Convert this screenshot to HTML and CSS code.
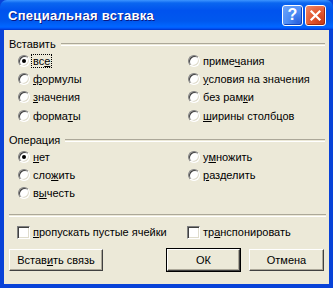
FILE: index.html
```html
<!DOCTYPE html>
<html>
<head>
    <meta charset="utf-8">
    <title>Специальная вставка</title>
    <link rel="stylesheet" href="styles.css">
</head>
<body>

<div class="window">
    <div class="titlebar">
        <div class="title">Специальная вставка</div>
        <div class="title-btn help">?</div>
        <div class="title-btn close">
            <svg width="13" height="13" viewBox="0 0 13 13">
                <path d="M2.5 2.5 L10.5 10.5 M10.5 2.5 L2.5 10.5" stroke="#fff" stroke-width="2.2" stroke-linecap="square"/>
            </svg>
        </div>
    </div>

    <div class="client">
        <div class="group-label"><span>Вставить</span><div class="etch"></div></div>
        <div class="options paste">
            <div class="col">
                <div class="opt"><span class="radio checked"></span><span class="focus">вс<u>е</u></span></div>
                <div class="opt"><span class="radio"></span><span><u>ф</u>ормулы</span></div>
                <div class="opt"><span class="radio"></span><span><u>з</u>начения</span></div>
                <div class="opt"><span class="radio"></span><span>форма<u>т</u>ы</span></div>
            </div>
            <div class="col">
                <div class="opt"><span class="radio"></span><span>приме<u>ч</u>ания</span></div>
                <div class="opt"><span class="radio"></span><span><u>у</u>словия на значения</span></div>
                <div class="opt"><span class="radio"></span><span>без рам<u>к</u>и</span></div>
                <div class="opt"><span class="radio"></span><span><u>ш</u>ирины столбцов</span></div>
            </div>
        </div>

        <div class="group-label second"><span>Операция</span><div class="etch"></div></div>
        <div class="options">
            <div class="col">
                <div class="opt"><span class="radio checked"></span><span><u>н</u>ет</span></div>
                <div class="opt"><span class="radio"></span><span>сло<u>ж</u>ить</span></div>
                <div class="opt"><span class="radio"></span><span>в<u>ы</u>честь</span></div>
            </div>
            <div class="col">
                <div class="opt"><span class="radio"></span><span>у<u>м</u>ножить</span></div>
                <div class="opt"><span class="radio"></span><span><u>р</u>азделить</span></div>
            </div>
        </div>

        <div class="etch separator"></div>

        <div class="options checks">
            <div class="col">
                <div class="opt"><span class="check"></span><span><u>п</u>ропускать пустые ячейки</span></div>
            </div>
            <div class="col">
                <div class="opt"><span class="check"></span><span>тр<u>а</u>нспонировать</span></div>
            </div>
        </div>

        <div class="buttons">
            <button class="btn link">Встав<u>и</u>ть связь</button>
            <div class="spacer"></div>
            <button class="btn default">ОК</button>
            <button class="btn">Отмена</button>
        </div>
    </div>
</div>

</body>
</html>
```

FILE: styles.css
```css
body {
    margin: 0;
    font-family: "Liberation Sans", Arial, sans-serif;
    font-size: 11px;
    color: #000;
}
.window {
    width: 333px;
    height: 288px;
    display: flex;
    flex-direction: column;
    background: #0842d8;
}
.titlebar {
    height: 30px;
    flex-shrink: 0;
    display: flex;
    align-items: center;
    padding: 0 7px 0 7px;
    border-radius: 7px 7px 0 0;
    background: linear-gradient(to bottom, #3d95ff 0%, #0a66f0 10%, #0053ee 35%, #0058ee 70%, #0066ff 88%, #005bff 94%, #003dd7 97%, #003dd7 100%);
}
.title {
    flex: 1;
    color: #fff;
    font-weight: bold;
    font-size: 13px;
    letter-spacing: 0.3px;
    text-shadow: 1px 1px #0a1883;
    padding-left: 1px;
}
.title-btn {
    width: 19px;
    height: 19px;
    border: 1px solid #fff;
    border-radius: 3px;
    margin-left: 2px;
    display: flex;
    align-items: center;
    justify-content: center;
    color: #fff;
    font-weight: bold;
    font-size: 16px;
}
.help {
    background: radial-gradient(circle at 80% 85%, #2c63e0 0%, #4c8cf5 45%, #6fa5fa 100%);
    box-shadow: inset -1px -1px #1443b8;
}
.close {
    background: radial-gradient(circle at 80% 85%, #c93d1a 0%, #e2562e 45%, #ef8b6b 100%);
    box-shadow: inset -1px -1px #a02a0e;
}
.client {
    flex: 1;
    background: #ece9d8;
    margin: 0 4px 4px 4px;
    padding: 7px 4px 0 5px;
    display: flex;
    flex-direction: column;
}
.group-label {
    display: flex;
    align-items: center;
    height: 13px;
}
.group-label span {
    margin-right: 5px;
}
.group-label .etch {
    flex: 1;
    margin-top: 2px;
}
.etch {
    height: 1px;
    border-top: 1px solid #aca899;
    border-bottom: 1px solid #fff;
}
.second {
    margin-top: 8px;
}
.options {
    display: flex;
    padding-left: 9px;
    margin-top: 2px;
}
.col {
    flex: 1;
}
.col:first-child {
    flex: 0 0 170px;
}
.opt {
    height: 18px;
    display: flex;
    align-items: center;
}
.paste .opt:last-child {
    height: 19px;
}
.radio {
    width: 12px;
    height: 12px;
    box-sizing: border-box;
    border-radius: 50%;
    border: 1px solid;
    border-color: #808080 #fff #fff #808080;
    background: #fff;
    box-shadow: inset 1px 1px #404040, inset -1px -1px #dfdccc;
    margin-right: 3px;
    display: flex;
    align-items: center;
    justify-content: center;
}
.radio.checked::after {
    content: "";
    width: 4px;
    height: 4px;
    border-radius: 50%;
    background: #000;
}
.focus {
    outline: 1px dotted #000;
    outline-offset: 0;
    padding: 0 1px;
    margin-left: -1px;
}
.separator {
    margin-top: 12px;
    margin-right: -1px;
}
.checks {
    padding-left: 8px;
    margin-top: 6px;
}
.check {
    width: 13px;
    height: 13px;
    box-sizing: border-box;
    border: 1px solid;
    border-color: #808080 #fff #fff #808080;
    background: #fff;
    box-shadow: inset 1px 1px #404040, inset -1px -1px #dfdccc;
    margin-right: 3px;
}
.buttons {
    display: flex;
    margin-top: 8px;
    padding-right: 1px;
}
.spacer {
    flex: 1;
}
.btn {
    height: 22px;
    font-family: "Liberation Sans", Arial, sans-serif;
    font-size: 11px;
    color: #000;
    background: #ece9d8;
    border: 1px solid;
    border-color: #fff #404040 #404040 #fff;
    box-shadow: inset -1px -1px #aca899;
    padding: 0;
}
.link {
    width: 94px;
}
.default {
    width: 73px;
    outline: 1px solid #000;
    outline-offset: 0;
    margin-right: 9px;
}
.btn:last-child {
    width: 75px;
}
```
